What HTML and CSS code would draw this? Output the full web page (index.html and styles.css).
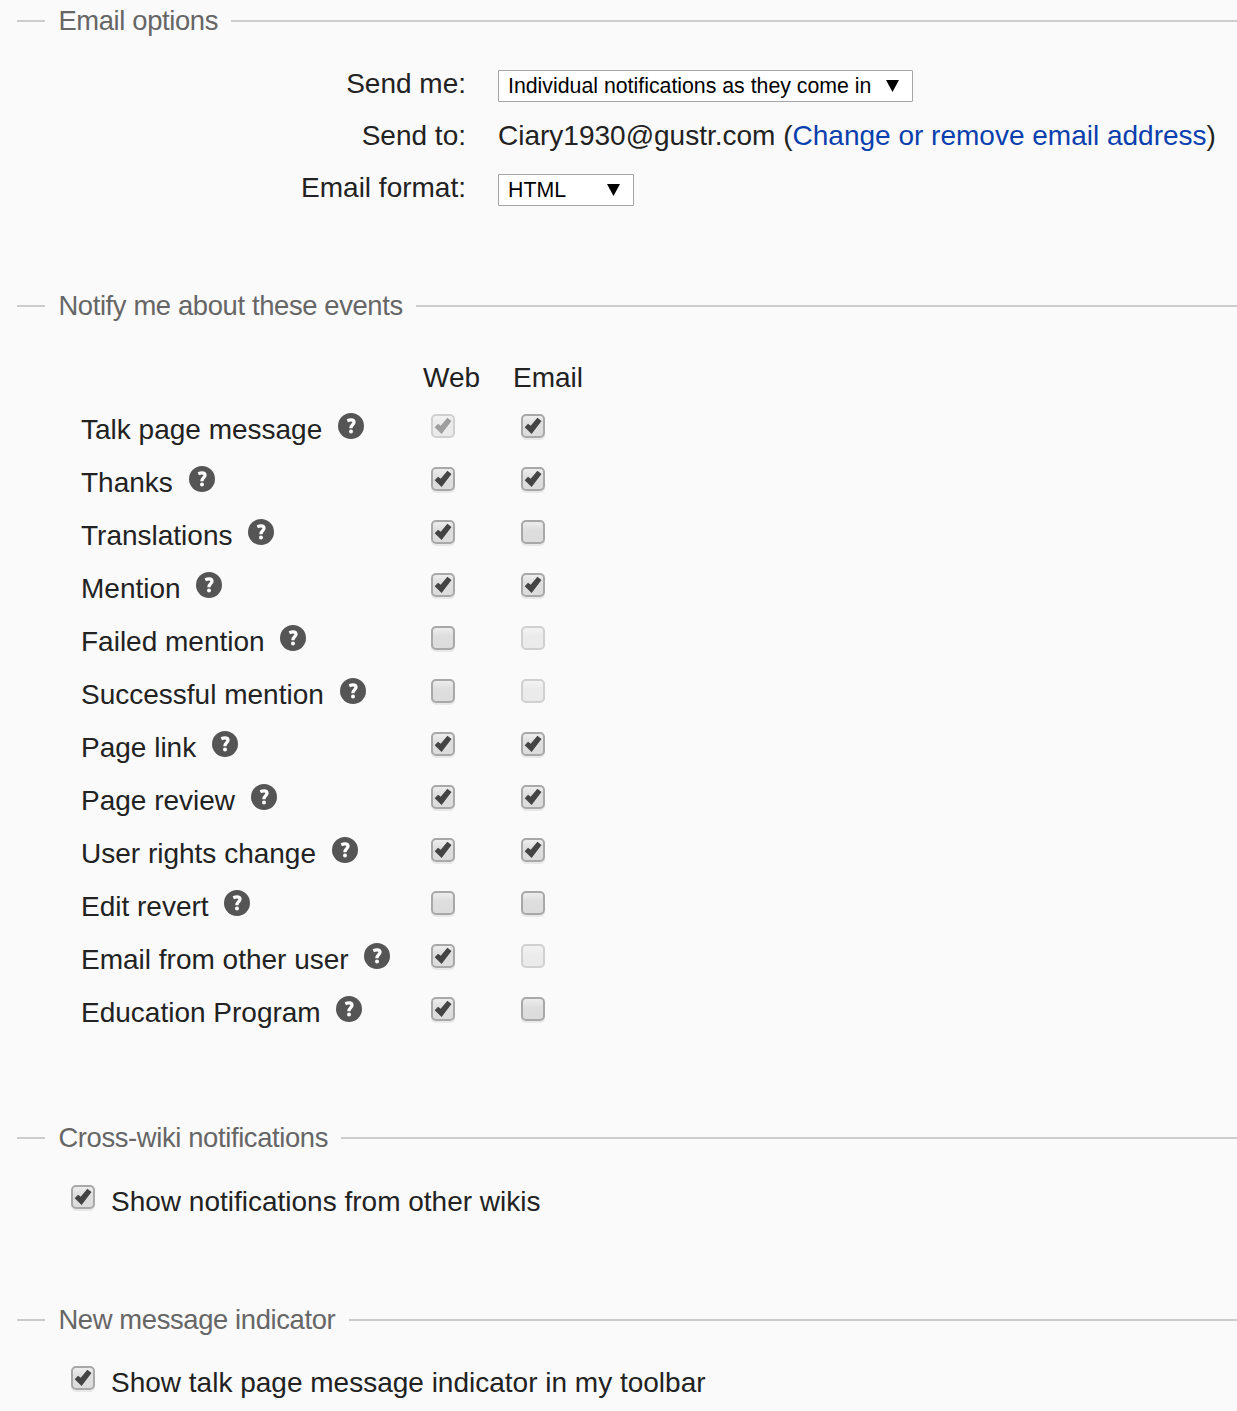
FILE: index.html
```html
<!DOCTYPE html>
<html lang="en">
<head>
<meta charset="utf-8">
<title>Notification preferences</title>
<link rel="stylesheet" href="styles.css">
</head>
<body>
<form class="preferences">
  <section class="group group-email">
    <h2 class="legend">Email options</h2>
    <div class="fields">
      <span class="label">Send me:</span>
      <div class="select select-wide"><span>Individual notifications as they come in</span><i class="arrow"></i></div>
      <span class="label">Send to:</span>
      <div class="address">Ciary1930@gustr.com (<a class="link">Change or remove email address</a>)</div>
      <span class="label">Email format:</span>
      <div class="select select-format"><span>HTML</span><i class="arrow"></i></div>
    </div>
  </section>
  <section class="group group-events">
    <h2 class="legend">Notify me about these events</h2>
    <div class="head"><span></span><span>Web</span><span>Email</span></div>
    <div class="events" id="events"></div>
  </section>
  <section class="group group-wiki">
    <h2 class="legend">Cross-wiki notifications</h2>
    <div class="option"><span class="box on"></span><span>Show notifications from other wikis</span></div>
  </section>
  <section class="group group-message">
    <h2 class="legend">New message indicator</h2>
    <div class="option"><span class="box on"></span><span>Show talk page message indicator in my toolbar</span></div>
  </section>
</form>
<script src="events.js"></script>
</body>
</html>
```
FILE: styles.css
```css
* { box-sizing: border-box; }
body {
  margin: 0;
  height: 1411px;
  overflow: hidden;
  background: #fafafa;
  color: #222;
  font: 28px/32px "Liberation Sans", Arial, sans-serif;
  white-space: nowrap;
}
.preferences { padding: 5px 0 0 17px; }
.group-email { height: 285px; }
.group-events { height: 832px; }
.group-wiki { height: 182px; }
.legend {
  display: flex;
  gap: 13.4px;
  margin: 0;
  height: 32px;
  font-size: 27.4px;
  font-weight: 400;
  letter-spacing: -0.37px;
  color: #666;
}
.legend::before, .legend::after { content: ""; height: 2px; margin-top: 15px; background: #ccc; }
.legend::before { width: 28px; }
.legend::after { flex: 1; }
.fields {
  display: grid;
  grid-template-columns: 449px auto;
  grid-auto-rows: 52px;
  column-gap: 32px;
  padding-top: 31px;
  justify-content: start;
}
.label { text-align: right; }
.link { color: #0b3fad; }
.select {
  display: flex;
  align-items: center;
  justify-content: space-between;
  height: 32px;
  margin-top: 2px;
  padding: 0 13px 0 9px;
  border: 1px solid #a5a5a5;
  border-radius: 1px;
  background: #fff;
  color: #000;
  font-size: 21.3px;
}
.select-wide { width: 415px; }
.select-format { width: 136px; }
.arrow { width: 13px; height: 12px; background: #000; clip-path: polygon(0 0, 100% 0, 50% 100%); }
.head, .event { display: grid; grid-template-columns: 342px 90px 90px; margin-left: 64px; }
.head { padding-top: 40px; height: 92px; }
.event { height: 53px; }
.event .box { margin-left: 8px; }
.name { display: flex; gap: 15.8px; }
.help { width: 26px; height: 26px; margin-top: -1px; }
.box {
  width: 24px;
  height: 24px;
  border: 2px solid #a8a8a8;
  border-radius: 5px;
  background: linear-gradient(#ededed, #dedede 40%, #dcdcdc);
  box-shadow: 0 2px 0 #e8e8e8;
}
.box.on::before {
  content: "";
  display: block;
  width: 20px;
  height: 20px;
  background: #444;
  clip-path: polygon(1.7px 11.2px, 5px 7.7px, 7.7px 9.8px, 14.4px 1.8px, 18.5px 5px, 8.6px 18px);
}
.box.disabled { opacity: 0.5; box-shadow: none; }
.option { display: flex; gap: 16px; padding: 32px 0 0 54px; }
.option .box { margin-top: -1px; }
.group-message .option { padding-top: 31px; }
```
FILE: events.js
```javascript
const events = [
  ["Talk page message", "on disabled", "on"],
  ["Thanks", "on", "on"],
  ["Translations", "on", ""],
  ["Mention", "on", "on"],
  ["Failed mention", "", "disabled"],
  ["Successful mention", "", "disabled"],
  ["Page link", "on", "on"],
  ["Page review", "on", "on"],
  ["User rights change", "on", "on"],
  ["Edit revert", "", ""],
  ["Email from other user", "on", "disabled"],
  ["Education Program", "on", ""]
];
const help = '<svg class="help" viewBox="0 0 26 26"><circle cx="13" cy="13" r="13" fill="#555"/><path d="M9.3 7.7Q11.4 6.8 13 6.8C15.2 6.8 16 7.7 16 9.2C16 11.7 12.9 11.8 12.9 15.3" fill="none" stroke="#fff" stroke-width="3.3"/><circle cx="13" cy="18.5" r="2" fill="#fff"/></svg>';
document.getElementById("events").innerHTML = events.map(([name, web, email]) =>
  `<div class="event"><div class="name"><span>${name}</span>${help}</div><span class="box ${web}"></span><span class="box ${email}"></span></div>`
).join("");
```
